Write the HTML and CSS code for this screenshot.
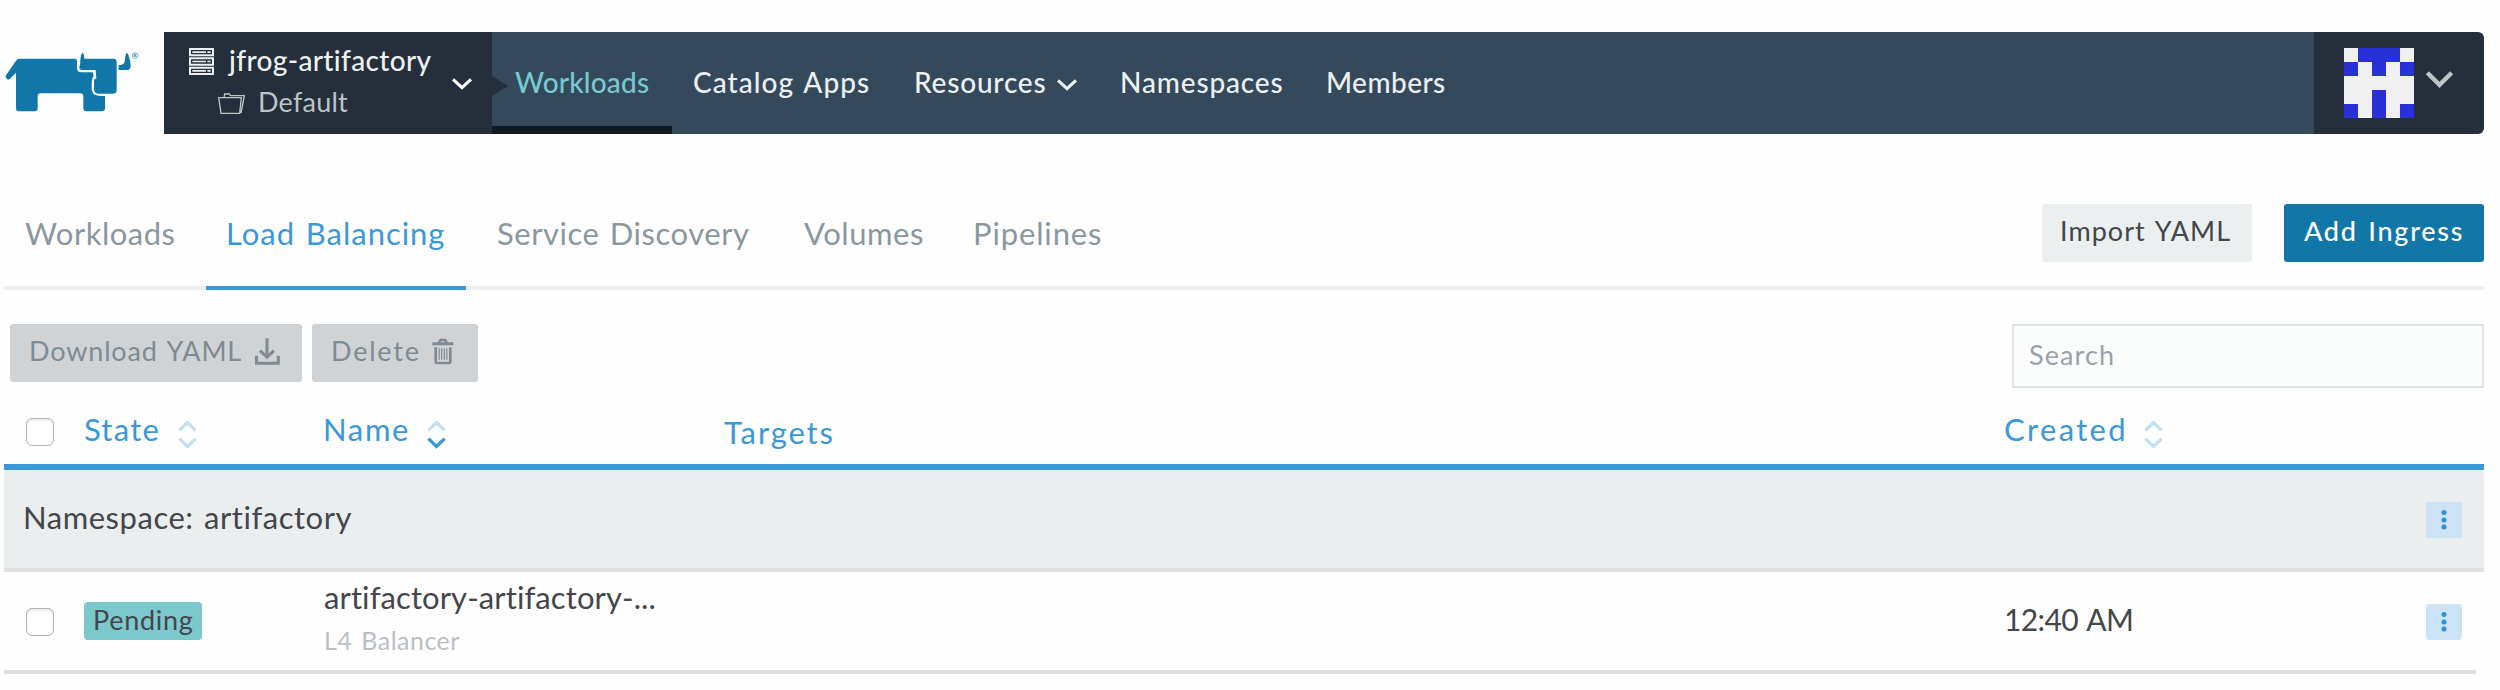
FILE: index.html
```html
<!DOCTYPE html>
<html lang="en">
<head>
<meta charset="utf-8">
<title>Load Balancing</title>
<link rel="stylesheet" href="styles.css">
</head>
<body>
<svg class="defs" width="0" height="0" aria-hidden="true">
  <symbol id="chevron" viewBox="0 0 60 36"><path d="M3 4 L30 29 L57 4" fill="none" stroke="currentColor" stroke-width="9.5"/></symbol>
  <symbol id="up" viewBox="0 0 58 37"><path d="M4 32 L29 8 L54 32" fill="none" stroke="currentColor" stroke-width="10.5"/></symbol>
  <symbol id="down" viewBox="0 0 58 37"><path d="M4 5 L29 29 L54 5" fill="none" stroke="currentColor" stroke-width="10.5"/></symbol>
</svg>

<header class="header">
  <a class="logo">
    <svg width="150" height="72" viewBox="0 0 450 216" fill="#1177a8">
      <path d="M58 41 L228 41 Q233 47 231 54 L231 72 Q233 82 245 82 L278 82 L281 92 Q274 102 275 130 Q276 152 295 152 L315 153 L315 190 Q315 199 306 199 L259 199 Q250 199 250 190 L250 154 Q249 145 241 145 L122 145 Q113 145 113 154 L113 190 Q113 199 105 199 L56 199 Q48 199 48 190 L48 83 L29 102 Q23 107 17 97 Q16 94 18 91 L49 46 Q52 41 58 41 Z"/>
      <path d="M248 23 Q252 24 253 41 L340 41 Q350 41 350 51 L350 136 Q350 146 340 146 L295 146 Q282 146 282 130 L282 105 Q283 101 289 101 L287 75 L246 75 Q238 74 238 65 Q241 60 241 45 Q243 25 248 23 Z"/>
      <path d="M380 23 Q385 25 388 40 Q393 52 392 65 Q390 75 380 75 L356 75 L356 60 Q371 60 374 50 Q376 28 380 23 Z"/>
      <circle cx="405" cy="32" r="8.5" fill="none" stroke="#1177a8" stroke-width="1.8"/>
      <text class="logo-r" x="405" y="37" text-anchor="middle">R</text>
    </svg>
  </a>
  <div class="cluster">
    <div class="cluster-body">
      <div class="cluster-name">
        <svg width="25" height="27" viewBox="27 24 75 81">
          <g fill="#ecf0f1"><path d="M27 24h75v25H27zM27 52h75v25H27zM27 80h75v25H27z"/></g>
          <g fill="#ecf0f1" stroke="#242f3b" stroke-width="4"><path d="M35 32h59v9H35zM35 60h59v9H35zM35 88h59v9H35zM80 32v9M80 60v9M80 88v9"/></g>
        </svg>
        <span class="ls-cluster">jfrog-artifactory</span>
      </div>
      <div class="project-name">
        <svg width="27" height="21" viewBox="113 159 81 63" fill="none" stroke="#bdc3c7" stroke-width="4">
          <path d="M115 173 H183 L178 220 H122 Z M131 173 L133 162 H147 L151 167 H192 L182 219"/>
        </svg>
        <span class="ls-project">Default</span>
      </div>
    </div>
    <svg class="cluster-chevron" width="20" height="12"><use href="#chevron"/></svg>
  </div>
  <nav class="nav">
    <a class="nav-item nav-workloads active">Workloads</a>
    <a class="nav-item nav-catalog">Catalog Apps</a>
    <a class="nav-item nav-resources">Resources <svg width="20" height="12"><use href="#chevron"/></svg></a>
    <a class="nav-item nav-namespaces">Namespaces</a>
    <a class="nav-item nav-members">Members</a>
  </nav>
  <div class="user">
    <svg width="70" height="70" viewBox="0 0 5 5" shape-rendering="crispEdges">
      <path fill="#f0f0f0" d="M0 0h5v5H0z"/>
      <path fill="#2831d6" d="M1 0h3v1H1zM0 1h1v1H0zM2 1h1v1H2zM4 1h1v1H4zM2 3h1v2H2zM0 4h1v1H0zM4 4h1v1H4z"/>
    </svg>
    <svg class="user-chevron" width="27" height="17" viewBox="0 0 80 50"><path d="M4 5 L40 41 L76 5" fill="none" stroke="currentColor" stroke-width="13"/></svg>
  </div>
</header>

<main>
  <div class="tabs">
    <a class="tab tab-workloads">Workloads</a>
    <a class="tab tab-lb current">Load Balancing</a>
    <a class="tab tab-service">Service Discovery</a>
    <a class="tab tab-volumes">Volumes</a>
    <a class="tab tab-pipelines">Pipelines</a>
    <div class="tab-actions">
      <button class="btn btn-import">Import YAML</button>
      <button class="btn btn-add">Add Ingress</button>
    </div>
  </div>

  <div class="toolbar">
    <button class="btn btn-bulk btn-download"><span>Download YAML</span>
      <svg width="25" height="27" viewBox="735 56 74 79" fill="none" stroke="currentColor" stroke-width="9"><path d="M770.500 56V106M750 93L770.500 112L791 93" /><path d="M739.500 108V130.500H804V108"/></svg>
    </button>
    <button class="btn btn-bulk btn-delete"><span>Delete</span>
      <svg width="22" height="27" viewBox="1268 56 66 79"><path fill="currentColor" d="M1269 68H1286Q1288 57 1295 57H1307Q1313 57 1315 68H1332V77H1269ZM1294 68H1307Q1307 65 1304 65H1297Q1294 65 1294 68Z"/><path fill="none" stroke="currentColor" stroke-width="8" d="M1279 83V125Q1279 130 1284 130H1318Q1323 130 1323 125V83"/><path fill="none" stroke="currentColor" stroke-width="3.500" d="M1289.500 86V120M1297 86V120M1305 86V120M1312.500 86V120"/></svg>
    </button>
    <input class="search" type="text" placeholder="Search">
  </div>

  <div class="grid head">
    <span class="check"></span>
    <div class="sortable sort-state"><span>State</span><i class="sort"><svg width="19" height="12"><use href="#up"/></svg><svg width="19" height="12"><use href="#down"/></svg></i></div>
    <div class="sortable sort-name"><span>Name</span><i class="sort desc"><svg width="19" height="12"><use href="#up"/></svg><svg width="19" height="12"><use href="#down"/></svg></i></div>
    <div class="head-targets">Targets</div>
    <div class="sortable sort-created"><span>Created</span><i class="sort"><svg width="19" height="12"><use href="#up"/></svg><svg width="19" height="12"><use href="#down"/></svg></i></div>
  </div>

  <div class="group">
    <span class="group-name">Namespace: artifactory</span>
    <button class="more"><svg width="6" height="22" viewBox="0 0 6 22" fill="#3090d8"><circle cx="3" cy="3.500" r="2.500"/><circle cx="3" cy="11" r="2.500"/><circle cx="3" cy="18" r="2.500"/></svg></button>
  </div>

  <div class="grid row">
    <span class="check"></span>
    <div class="state"><span class="badge">Pending</span></div>
    <div class="names"><div class="name">artifactory-artifactory-...</div><div class="kind">L4 Balancer</div></div>
    <div></div>
    <div class="created">12:40 AM</div>
    <button class="more"><svg width="6" height="22" viewBox="0 0 6 22" fill="#3090d8"><circle cx="3" cy="3.500" r="2.500"/><circle cx="3" cy="11" r="2.500"/><circle cx="3" cy="18" r="2.500"/></svg></button>
  </div>
</main>
</body>
</html>
```
FILE: styles.css
```css
* { box-sizing: border-box; }
body {
  margin: 0;
  background: #fefefe;
  color: #43464a;
  font-family: Lato, "Open Sans", sans-serif;
  font-size: 31px;
  line-height: 40px;
  word-spacing: 2px;
  white-space: nowrap;
}
svg { display: block; flex: none; }
.defs { position: absolute; }
button, input { font: inherit; word-spacing: inherit; border: 0; margin: 0; }

/* Header */
.header { display: flex; height: 134px; padding: 32px 16px 0 0; color: #ecf0f1; font-size: 28px; }
.logo { width: 164px; padding-top: 13px; }
.logo-r { font-size: 13px; font-weight: 700; }
.cluster {
  position: relative;
  display: flex;
  align-items: center;
  justify-content: space-between;
  width: 328px;
  padding: 0 20px 0 25px;
  background: #242f3b;
}
.cluster::after {
  content: "";
  position: absolute;
  left: 100%;
  top: 44px;
  z-index: 1;
  border: solid transparent;
  border-width: 10px 0 10px 16px;
  border-left-color: #242f3b;
}
.cluster-body { line-height: 42px; padding-bottom: 4px; }
.cluster-name, .project-name { display: flex; align-items: center; height: 42px; }
.cluster-name { gap: 15px; font-weight: 500; }
.project-name { gap: 13px; padding-left: 29px; font-size: 27px; color: #bdc3c7; }
.cluster-name svg, .project-name svg { margin-top: 3px; }
.ls-cluster { letter-spacing: .35px; }
.ls-project { letter-spacing: .22px; }
.cluster-chevron { color: #fff; margin-top: 2px; }
.nav { display: flex; flex: 1; background: #35495d; font-weight: 500; }
.nav-item { display: flex; align-items: center; padding: 0 0 2px 21px; }
.nav-item svg { margin: 6px 0 0 11px; }
.nav-item.active { color: #75c9cf; padding-left: 23px; box-shadow: inset 0 -8px #121a21; }
.nav-workloads { width: 180px; letter-spacing: .19px; }
.nav-catalog { width: 221px; letter-spacing: 1.06px; }
.nav-resources { width: 206px; letter-spacing: .81px; }
.nav-namespaces { width: 206px; letter-spacing: .85px; }
.nav-members { letter-spacing: .44px; }
.user {
  display: flex;
  align-items: center;
  gap: 12px;
  width: 170px;
  padding-left: 30px;
  background: #242f3b;
  border-radius: 0 6px 6px 0;
  color: #bdc3c7;
}
.user-chevron { margin-top: -7px; }

main { padding: 0 16px 0 4px; }

/* Tabs */
.tabs { display: flex; height: 156px; padding-left: 1px; box-shadow: inset 0 -4px #ebeeef; color: #8b979e; }
.tab { padding: 79px 0 0 20px; }
.tab.current { color: #3a98d8; box-shadow: inset 0 -4px #3a98d8; }
.tab-workloads { width: 201px; letter-spacing: .5px; }
.tab-lb { width: 260px; margin-right: 11px; letter-spacing: .96px; }
.tab-service { width: 307px; letter-spacing: .52px; }
.tab-volumes { width: 169px; letter-spacing: .55px; }
.tab-pipelines { letter-spacing: .87px; }
.tab-actions { display: flex; gap: 32px; margin-left: auto; padding-top: 70px; }

.btn {
  display: flex;
  align-items: center;
  height: 58px;
  padding: 0 0 5px 18px;
  border-radius: 3px;
  font-size: 27px;
}
.btn-import { width: 210px; background: #ebefef; color: #43464a; letter-spacing: 1.05px; }
.btn-add { width: 200px; padding-left: 20px; background: #1177a8; color: #fff; font-weight: 500; letter-spacing: 1.75px; }

/* Toolbar */
.toolbar { display: flex; gap: 10px; height: 98px; padding: 34px 0 0 6px; }
.btn-bulk { justify-content: space-between; padding-left: 19px; background: #cfd3d6; color: #7f8a91; }
.btn-bulk svg { margin-top: 2px; }
.btn-download { width: 292px; padding-right: 22px; letter-spacing: .85px; }
.btn-delete { width: 166px; padding-right: 24px; letter-spacing: 1.8px; }
.search {
  width: 472px;
  height: 64px;
  margin-left: auto;
  padding: 0 16px 3px 15px;
  border: 2px solid #dce4e5;
  background: #fbfdfc;
  font-size: 27px;
  letter-spacing: 1.1px;
}
.search::placeholder { color: #9aa1a9; opacity: 1; }

/* Table */
.grid { display: grid; grid-template-columns: 80px 239px 401px 1280px 1fr auto; align-items: center; }
.check {
  width: 28px;
  height: 28px;
  margin-left: 22px;
  border: 1px solid #b3b3b3;
  border-radius: 6px;
  background: #fff;
  box-shadow: inset 0 2px 2px #ececec;
}
.head { height: 82px; padding-top: 12px; border-bottom: 6px solid #3a98d8; color: #3a98d8; }
.sortable { display: flex; align-items: center; }
.sortable span { margin-bottom: 7px; }
.sort { display: flex; flex-direction: column; gap: 5px; margin-top: 5px; color: #c3e0f3; }
.sort.desc svg:last-child { color: #3a98d8; }
.sort-state { letter-spacing: 1.25px; }
.sort-state span { width: 94px; }
.sort-name { letter-spacing: 1.65px; }
.sort-name span { width: 104px; }
.head-targets { letter-spacing: 1.85px; }
.sort-created { letter-spacing: 2.35px; }
.sort-created span { width: 140px; }

.group {
  display: flex;
  align-items: center;
  justify-content: space-between;
  height: 102px;
  padding: 0 22px 4px 19px;
  background: #eaeeef;
  border-bottom: 4px solid #dddfe1;
}
.group-name { letter-spacing: .53px; }
.more {
  display: flex;
  align-items: center;
  justify-content: center;
  width: 36px;
  height: 36px;
  padding: 0 1px 0 0;
  border-radius: 3px;
  background: #cce3f6;
}
.group .more { margin-top: 6px; }

.row { height: 102px; margin-right: 8px; padding-right: 14px; border-bottom: 4px solid #dddfe1; }
.row .check, .row .more { margin-top: 2px; }
.state { display: flex; }
.badge {
  width: 118px;
  height: 38px;
  padding-left: 9px;
  border-radius: 4px;
  background: #7bc8cd;
  font-size: 27px;
  line-height: 36px;
  letter-spacing: .7px;
}
.names { padding: 0 0 7px 1px; }
.name { line-height: 44px; letter-spacing: .1px; }
.kind { color: #babfc4; font-size: 25px; line-height: 42px; letter-spacing: .5px; }
.created { padding-bottom: 5px; font-size: 30px; letter-spacing: -.6px; }
```
